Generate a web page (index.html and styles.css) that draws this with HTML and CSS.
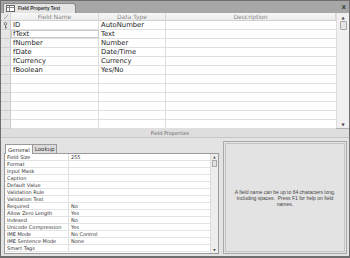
FILE: index.html
```html
<!DOCTYPE html>
<html>
<head>
<meta charset="utf-8">
<link rel="stylesheet" href="styles.css">
</head>
<body>
<div class="window">
  <div class="titlebar">
    <div class="doctab">
      <svg class="tabicon" width="9" height="7" viewBox="0 0 9 7"><rect x="0.5" y="0.5" width="8" height="6" fill="#fff" stroke="#666"/><line x1="0.5" y1="2.5" x2="8.5" y2="2.5" stroke="#888"/><line x1="3.5" y1="0.5" x2="3.5" y2="6.5" stroke="#888"/></svg>
      <span>Field Property Test</span>
    </div>
    <div class="close">x</div>
  </div>
  <div class="design">
    <div class="grid">
      <div class="hrow">
        <div class="sel hsel"><svg width="6" height="6" viewBox="0 0 6 6"><path d="M1 5 L5 1" stroke="#aaa" fill="none"/></svg></div>
        <div class="c1">Field Name</div>
        <div class="c2">Data Type</div>
        <div class="c3">Description</div>
      </div>
      <div class="row"><div class="sel"><svg width="5" height="7" viewBox="0 0 5 7"><circle cx="2.5" cy="1.8" r="1.3" fill="none" stroke="#777"/><line x1="2.5" y1="3" x2="2.5" y2="6.5" stroke="#777"/><line x1="2.5" y1="5.5" x2="4" y2="5.5" stroke="#777"/></svg></div><div class="c1">ID</div><div class="c2">AutoNumber</div><div class="c3"></div></div>
      <div class="row"><div class="sel"></div><div class="c1 focus">fText</div><div class="c2">Text</div><div class="c3"></div></div>
      <div class="row"><div class="sel"></div><div class="c1">fNumber</div><div class="c2">Number</div><div class="c3"></div></div>
      <div class="row"><div class="sel"></div><div class="c1">fDate</div><div class="c2">Date/Time</div><div class="c3"></div></div>
      <div class="row"><div class="sel"></div><div class="c1">fCurrency</div><div class="c2">Currency</div><div class="c3"></div></div>
      <div class="row"><div class="sel"></div><div class="c1">fBoolean</div><div class="c2">Yes/No</div><div class="c3"></div></div>
      <div class="row"><div class="sel"></div><div class="c1"></div><div class="c2"></div><div class="c3"></div></div>
      <div class="row"><div class="sel"></div><div class="c1"></div><div class="c2"></div><div class="c3"></div></div>
      <div class="row"><div class="sel"></div><div class="c1"></div><div class="c2"></div><div class="c3"></div></div>
      <div class="row"><div class="sel"></div><div class="c1"></div><div class="c2"></div><div class="c3"></div></div>
      <div class="row"><div class="sel"></div><div class="c1"></div><div class="c2"></div><div class="c3"></div></div>
      <div class="row"><div class="sel"></div><div class="c1"></div><div class="c2"></div><div class="c3"></div></div>
      <div class="row last"><div class="sel"></div><div class="c1"></div><div class="c2"></div><div class="c3"></div></div>
    </div>
    <div class="vscroll">
      <div class="arrow">&#9650;</div>
      <div class="thumb"></div>
      <div class="track"></div>
      <div class="arrow">&#9660;</div>
    </div>
  </div>
  <div class="fpbar">Field Properties</div>
  <div class="lower">
    <div class="props">
      <div class="tabs">
        <div class="ptab active">General</div>
        <div class="ptab">Lookup</div>
      </div>
      <div class="pgrid-wrap">
        <div class="pgrid">
          <div class="prow"><div class="pl">Field Size</div><div class="pv">255</div></div>
          <div class="prow"><div class="pl">Format</div><div class="pv"></div></div>
          <div class="prow"><div class="pl">Input Mask</div><div class="pv"></div></div>
          <div class="prow"><div class="pl">Caption</div><div class="pv"></div></div>
          <div class="prow"><div class="pl">Default Value</div><div class="pv"></div></div>
          <div class="prow"><div class="pl">Validation Rule</div><div class="pv"></div></div>
          <div class="prow"><div class="pl">Validation Text</div><div class="pv"></div></div>
          <div class="prow"><div class="pl">Required</div><div class="pv">No</div></div>
          <div class="prow"><div class="pl">Allow Zero Length</div><div class="pv">Yes</div></div>
          <div class="prow"><div class="pl">Indexed</div><div class="pv">No</div></div>
          <div class="prow"><div class="pl">Unicode Compression</div><div class="pv">Yes</div></div>
          <div class="prow"><div class="pl">IME Mode</div><div class="pv">No Control</div></div>
          <div class="prow"><div class="pl">IME Sentence Mode</div><div class="pv">None</div></div>
          <div class="prow"><div class="pl">Smart Tags</div><div class="pv"></div></div>
        </div>
        <div class="pscroll">
          <div class="parrow">&#9650;</div>
          <div class="pthumb"></div>
          <div class="ptrack"></div>
          <div class="parrow">&#9660;</div>
        </div>
      </div>
    </div>
    <div class="help">
      <div class="helpinner">A field name can be up to 64 characters long, including spaces.&nbsp; Press F1 for help on field names.</div>
    </div>
  </div>
</div>
</body>
</html>
```
FILE: styles.css
```css
* { box-sizing: border-box; }
html, body { margin: 0; padding: 0; background: #fff; }
body { font-family: "DejaVu Sans", "Liberation Sans", sans-serif; color: #333; }
.window {
  width: 350px; height: 258px;
  background: #e3e3e3;
  border: 1px solid #6e6e6e;
  border-bottom: 2px solid #6e6e6e;
  display: flex; flex-direction: column;
  overflow: hidden;
}
.titlebar {
  height: 12px; background: #a7a7a7;
  display: flex; align-items: flex-end; justify-content: space-between;
  padding-left: 2px; flex: none;
}
.doctab {
  height: 10px; width: 73px;
  background: #e4e4e4;
  border: 1px solid #8a8a8a; border-bottom: none;
  border-top-right-radius: 3px;
  display: flex; align-items: center; gap: 3px;
  padding-left: 2px;
  font-family: "Liberation Sans", sans-serif;
  font-size: 4.7px; font-weight: bold; color: #333;
  white-space: nowrap;
}
.tabicon { flex: none; }
.close { font-size: 7px; font-weight: bold; color: #444; align-self: center; padding-right: 3px; line-height: 1; }
.design {
  height: 116px; display: flex; background: #fff;
  border-bottom: 1px solid #b0b0b0; flex: none;
}
.grid { flex: 1; display: flex; flex-direction: column; }
.hrow, .row { display: flex; height: 9px; flex: none; }
.hrow { height: 8px; background: linear-gradient(#f7f7f7, #ececec); border-bottom: 1px solid #d0d0d0; color: #888; font-size: 6px; }
.hrow > div { display: flex; align-items: center; justify-content: center; border-right: 1px solid #d8d8d8; }
.row { border-bottom: 1px solid #e0e0e0; font-size: 6.8px; color: #222; }
.row.last { flex: 1; border-bottom: none; }
.sel { width: 10px; flex: none; background: #e6e6e6; border-right: 1px solid #c8c8c8; display: flex; align-items: center; justify-content: center; }
.row .sel { border-bottom: 1px solid #d0d0d0; margin-bottom: -1px; }
.c1 { width: 88px; flex: none; border-right: 1px solid #dedede; padding-left: 2px; display: flex; align-items: center; }
.c2 { width: 67px; flex: none; border-right: 1px solid #dedede; padding-left: 2px; display: flex; align-items: center; }
.c3 { flex: 1; display: flex; align-items: center; }
.hrow .c1, .hrow .c2 { padding-left: 0; }
.c1.focus { outline: 1px solid #c8c8c8; outline-offset: -1px; }
.vscroll { width: 13px; flex: none; background: #f0f0f0; border-left: 1px solid #dcdcdc; display: flex; flex-direction: column; align-items: center; }
.arrow { height: 8px; font-size: 4px; color: #444; display: flex; align-items: center; justify-content: center; }
.thumb { width: 7px; height: 9px; background: #e4e4e4; border: 1px solid #a8a8a8; border-radius: 1px; }
.track { flex: 1; }
.fpbar {
  height: 9px; background: #dedede; border-bottom: 1px solid #c6c6c6; flex: none;
  font-size: 5px; color: #666; text-align: center; line-height: 9px; padding-right: 10px;
}
.lower { flex: 1; display: flex; padding: 3px 2px 2px 3px; gap: 4px; min-height: 0; }
.props { width: 215px; flex: none; display: flex; flex-direction: column; padding-top: 2px; }
.tabs { display: flex; height: 10px; padding-left: 1px; align-items: flex-end; flex: none; }
.ptab { height: 9px; font-size: 5.5px; padding: 0 2px; border: 1px solid #9a9a9a; border-bottom: none; background: #dcdcdc; display: flex; align-items: center; color: #333; }
.ptab.active { background: #fff; height: 10px; margin-bottom: -1px; position: relative; z-index: 1; }
.ptab + .ptab { border-left: none; }
.pgrid-wrap { flex: 1; display: flex; border: 1px solid #9a9a9a; background: #fff; min-height: 0; }
.pgrid { flex: 1; display: flex; flex-direction: column; }
.prow { height: 7px; display: flex; flex: none; border-bottom: 1px solid #e4e4e4; font-size: 5px; color: #333; }
.pl { width: 64px; flex: none; border-right: 1px solid #e0e0e0; padding-left: 2px; line-height: 6px; white-space: nowrap; }
.pv { flex: 1; padding-left: 2px; line-height: 6px; }
.pscroll { width: 8px; flex: none; background: #ededed; border-left: 1px solid #dcdcdc; display: flex; flex-direction: column; align-items: center; }
.parrow { height: 6px; font-size: 3px; color: #444; display: flex; align-items: center; }
.pthumb { width: 5px; height: 7px; background: #e2e2e2; border: 1px solid #a8a8a8; }
.ptrack { flex: 1; }
.help { flex: 1; border: 1px solid #a8a8a8; padding: 1px; background: #e3e3e3; }
.helpinner { height: 100%; border: 1px solid #c4c4c4; display: flex; align-items: center; justify-content: center; text-align: center; font-family: "Liberation Sans", sans-serif; font-size: 5px; line-height: 6px; color: #444; padding: 0 2px; }
```
